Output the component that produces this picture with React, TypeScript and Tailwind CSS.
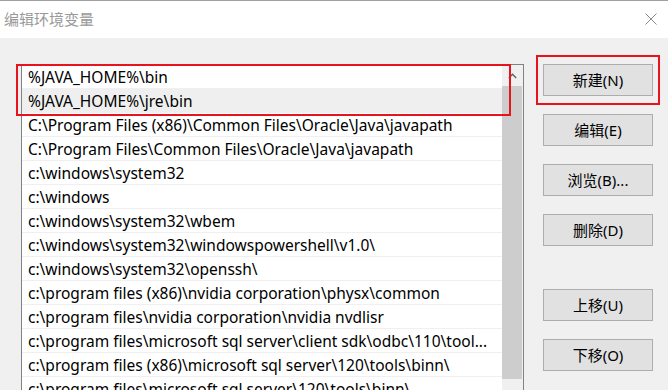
import React from "react";

const rows = [
  "%JAVA_HOME%\\bin",
  "%JAVA_HOME%\\jre\\bin",
  "C:\\Program Files (x86)\\Common Files\\Oracle\\Java\\javapath",
  "C:\\Program Files\\Common Files\\Oracle\\Java\\javapath",
  "c:\\windows\\system32",
  "c:\\windows",
  "c:\\windows\\system32\\wbem",
  "c:\\windows\\system32\\windowspowershell\\v1.0\\",
  "c:\\windows\\system32\\openssh\\",
  "c:\\program files (x86)\\nvidia corporation\\physx\\common",
  "c:\\program files\\nvidia corporation\\nvidia nvdlisr",
  "c:\\program files\\microsoft sql server\\client sdk\\odbc\\110\\tool...",
  "c:\\program files (x86)\\microsoft sql server\\120\\tools\\binn\\",
  "c:\\program files\\microsoft sql server\\120\\tools\\binn\\",
];

const FONT = "font-['Noto_Sans','Noto_Sans_CJK_SC',sans-serif]";

function Btn({ label, className = "" }: { label: string; className?: string }) {
  return (
    <button
      className={`h-[32px] w-[110px] border border-[#adadad] bg-[#e1e1e1] text-[15px] text-black ${className}`}
    >
      {label}
    </button>
  );
}

export default function App() {
  return (
    <div className={`relative h-[390px] w-[668px] overflow-hidden bg-[#f0f0f0] ${FONT}`}>
      {/* title bar */}
      <div className="flex h-[38px] items-center justify-between border-t border-[#a0a0a0] bg-white pl-[4px] pr-[11px]">
        <span className="text-[15px] text-[#999999]">编辑环境变量</span>
        <svg width="12" height="12" viewBox="0 0 12 12" className="mt-[-1px]">
          <path d="M0.5 0.5 L11.5 11.5 M11.5 0.5 L0.5 11.5" stroke="#888" strokeWidth="1" />
        </svg>
      </div>

      <div className="flex pl-[21px] pt-[26px]">
        {/* list */}
        <div className="relative flex h-[340px] w-[503px] border border-[#828282] bg-white">
          <div className="flex w-[480px] flex-col">
            {rows.map((r, i) => (
              <div
                key={i}
                className={`h-[24px] shrink-0 truncate border-b border-[#f0f0f0] pl-[6px] pr-[5px] text-[15.5px] leading-[24px] text-black ${
                  i === 1 ? "bg-[#efefef]" : ""
                }`}
              >
                {r}
              </div>
            ))}
          </div>
          {/* scrollbar */}
          <div className="flex w-[21px] flex-col bg-[#f0f0f0] pr-[1px]">
            <div className="flex h-[21px] items-center justify-center">
              <svg width="9" height="6" viewBox="0 0 9 6">
                <path d="M0.8 5 L4.5 1.3 L8.2 5" stroke="#606060" strokeWidth="1.4" fill="none" />
              </svg>
            </div>
            <div className="h-[293px] bg-[#cdcdcd]" />
          </div>
        </div>

        {/* buttons */}
        <div className="ml-[19px] flex flex-col">
          <Btn label="新建(N)" />
          <Btn label="编辑(E)" className="mt-[18px]" />
          <Btn label="浏览(B)..." className="mt-[18px]" />
          <Btn label="删除(D)" className="mt-[18px]" />
          <Btn label="上移(U)" className="mt-[43px]" />
          <Btn label="下移(O)" className="mt-[18px]" />
        </div>
      </div>

      {/* red highlight boxes */}
      <div className="absolute left-[16px] top-[64px] h-[52px] w-[495px] border-2 border-[#e8141d]" />
      <div className="absolute left-[536px] top-[55px] h-[50px] w-[124px] border-2 border-[#e8141d]" />
    </div>
  );
}
